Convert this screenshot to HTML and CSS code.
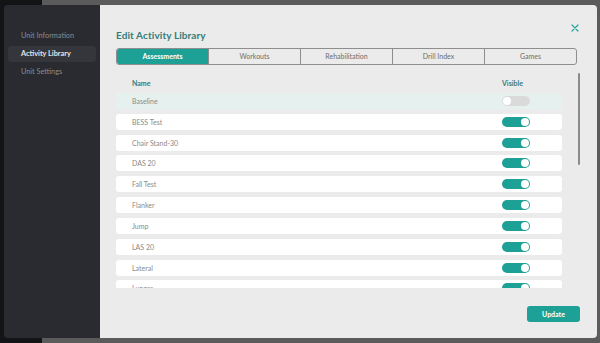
FILE: index.html
```html
<!DOCTYPE html>
<html lang="en">
<head>
    <meta charset="UTF-8">
    <meta name="viewport" content="width=device-width, initial-scale=1.0">
    <title>Edit Activity Library</title>
    <link rel="stylesheet" href="styles.css">
</head>
<body>
    <div class="page">
        <div class="page-nav"></div>
        <div class="page-content"></div>
    </div>

    <div class="modal">
        <aside class="sidebar">
            <div class="side-item">Unit Information</div>
            <div class="side-item active">Activity Library</div>
            <div class="side-item">Unit Settings</div>
        </aside>

        <main class="panel">
            <button class="close" aria-label="Close">
                <svg width="8" height="8" viewBox="0 0 8 8">
                    <path d="M1 1 L7 7 M7 1 L1 7" stroke="#27a59b" stroke-width="1.2" stroke-linecap="round"/>
                </svg>
            </button>
            <h1 class="title">Edit Activity Library</h1>

            <div class="tabs">
                <div class="tab active">Assessments</div>
                <div class="tab">Workouts</div>
                <div class="tab">Rehabilitation</div>
                <div class="tab">Drill Index</div>
                <div class="tab">Games</div>
            </div>

            <div class="list-wrap">
                <div class="list">
                    <div class="list-head">
                        <span>Name</span>
                        <span class="head-visible">Visible</span>
                    </div>
                    <div class="row highlight">
                        <span>Baseline</span>
                        <span class="toggle"></span>
                    </div>
                    <div class="row"><span>BESS Test</span><span class="toggle on"></span></div>
                    <div class="row"><span>Chair Stand-30</span><span class="toggle on"></span></div>
                    <div class="row"><span>DAS 20</span><span class="toggle on"></span></div>
                    <div class="row"><span>Fall Test</span><span class="toggle on"></span></div>
                    <div class="row"><span>Flanker</span><span class="toggle on"></span></div>
                    <div class="row"><span>Jump</span><span class="toggle on"></span></div>
                    <div class="row"><span>LAS 20</span><span class="toggle on"></span></div>
                    <div class="row"><span>Lateral</span><span class="toggle on"></span></div>
                    <div class="row"><span>Lunges</span><span class="toggle on"></span></div>
                </div>
                <div class="scrollbar"><div class="thumb"></div></div>
            </div>

            <div class="actions">
                <button class="update">Update</button>
            </div>
        </main>
    </div>
</body>
</html>
```

FILE: styles.css
```css
:root {
    --teal: #1da196;
    --teal-dark: #357d79;
    --panel: #ebebeb;
    --side: #2a2b30;
}

* {
    margin: 0;
    padding: 0;
    box-sizing: border-box;
    font-family: 'Lato', 'Noto Sans', sans-serif;
}

body {
    width: 600px;
    height: 343px;
    overflow: hidden;
    background: #5b5b5b;
}

/* page behind the dialog */
.page {
    display: flex;
    height: 100%;
}

.page-nav {
    width: 42px;
    background: #131416;
}

.page-content {
    flex: 1;
    background: #5b5b5b;
}

.modal {
    position: absolute;
    left: 4px;
    top: 5px;
    width: 593px;
    height: 333px;
    display: flex;
    border-radius: 4px;
    overflow: hidden;
}

.sidebar {
    flex: none;
    width: 96px;
    background: var(--side);
    padding: 23px 4px 0;
    display: flex;
    flex-direction: column;
    gap: 2px;
}

.side-item {
    height: 16px;
    line-height: 16px;
    padding-left: 13px;
    font-size: 7.3px;
    color: #8a8b8f;
    border-radius: 3px;
}

.side-item.active {
    background: #35363b;
    color: #e6e6e6;
    font-weight: 700;
}

.panel {
    flex: 1;
    min-width: 0;
    position: relative;
    background: var(--panel);
    padding: 22px 20px 0 16px;
    display: flex;
    flex-direction: column;
}

.close {
    position: absolute;
    top: 19px;
    right: 18px;
    width: 8px;
    height: 8px;
    border: none;
    background: none;
    display: flex;
}

.title {
    font-size: 10px;
    font-weight: 700;
    color: var(--teal-dark);
    height: 21px;
    line-height: 16px;
    letter-spacing: 0.1px;
}

.tabs {
    display: flex;
    height: 17px;
    border: 1px solid #8e8e8e;
    border-radius: 3px;
    overflow: hidden;
}

.tab {
    flex: 1;
    text-align: center;
    font-size: 7px;
    line-height: 15px;
    color: #6d6d6d;
    border-left: 1px solid #8e8e8e;
}

.tab:first-child {
    border-left: none;
}

.tab.active {
    background: var(--teal);
    color: #fff;
    font-weight: 700;
}

.list-wrap {
    display: flex;
    gap: 16px;
    height: 215px;
    margin-top: 8px;
    margin-right: -3px;
}

.list {
    width: 446px;
    overflow: hidden;
    display: flex;
    flex-direction: column;
    gap: 4.85px;
}

.list-head {
    flex: none;
    display: flex;
    justify-content: space-between;
    height: 15px;
    padding: 0 32px 0 16px;
    font-size: 7px;
    font-weight: 700;
    color: var(--teal-dark);
    line-height: 20px;
}

.head-visible {
    width: 28px;
}

.row {
    flex: none;
    height: 16px;
    background: #fff;
    border-radius: 3px;
    display: flex;
    align-items: center;
    justify-content: space-between;
    padding: 0 32px 0 16px;
    font-size: 7px;
    color: #8a8a8a;
}

.row.highlight {
    background: #e6f1ef;
}

.toggle {
    width: 28px;
    height: 10px;
    border-radius: 5px;
    background: #dadada;
    display: flex;
    align-items: center;
    padding: 0 1px;
}

.toggle::after {
    content: '';
    width: 8px;
    height: 8px;
    border-radius: 50%;
    background: #fff;
}

.toggle.on {
    background: var(--teal);
    justify-content: flex-end;
}

.scrollbar {
    flex: none;
    width: 2px;
}

.thumb {
    height: 92px;
    background: #8c8c8c;
    border-radius: 1px;
}

.actions {
    display: flex;
    justify-content: flex-end;
    margin-top: 18px;
    margin-right: -3px;
}

.update {
    width: 53px;
    height: 16px;
    border: none;
    border-radius: 3px;
    background: var(--teal);
    color: #fff;
    font-size: 7px;
    font-weight: 700;
}
```
